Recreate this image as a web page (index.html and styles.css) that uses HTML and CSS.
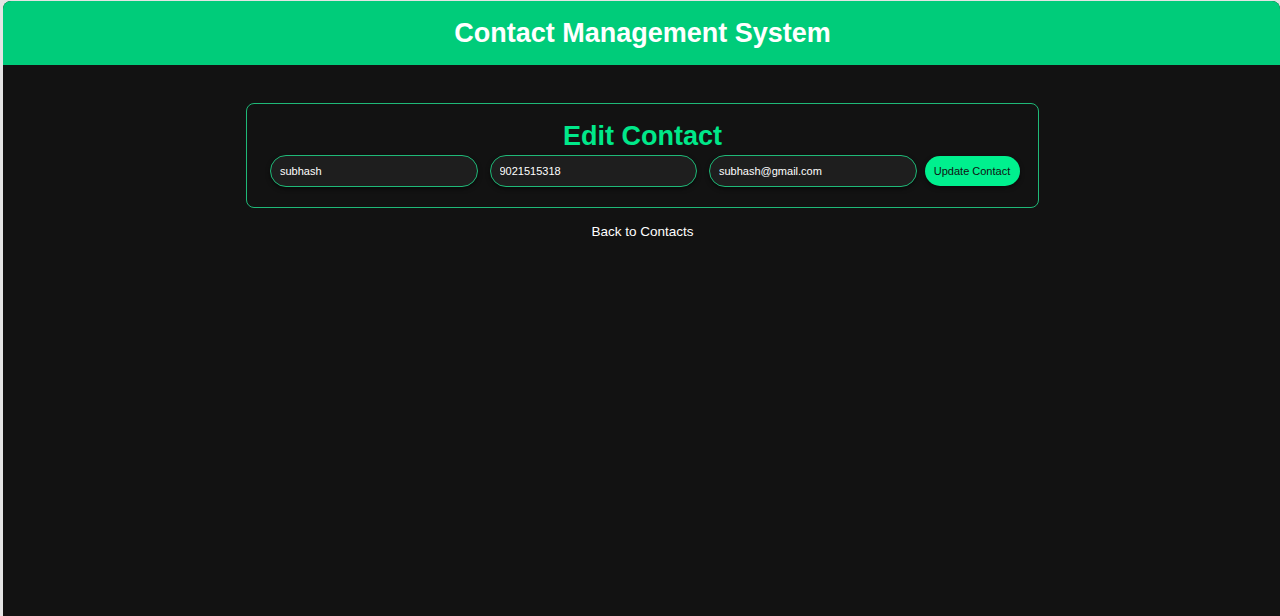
FILE: index.html
```html
<!DOCTYPE html>
<html>
<head>
<meta charset="utf-8">
<link rel="stylesheet" href="styles.css">
</head>
<body>
<div class="app">
  <header class="topbar">
    <h1 class="topbar-title">Contact Management System</h1>
  </header>
  <main class="content">
    <section class="card">
      <h2 class="card-title">Edit Contact</h2>
      <form class="edit-form">
        <input class="field field-name" type="text" value="subhash">
        <input class="field field-phone" type="text" value="9021515318">
        <input class="field field-email" type="text" value="subhash@gmail.com">
        <button class="btn-update" type="button">Update Contact</button>
      </form>
    </section>
    <a class="back-link" href="#">Back to Contacts</a>
  </main>
</div>
</body>
</html>
```

FILE: styles.css
```css
html, body {
  margin: 0;
  padding: 0;
  height: 100%;
}
body {
  background: #e4e4e4;
  font-family: "Liberation Sans", Arial, sans-serif;
  padding: 1px 0 0 3px;
  box-sizing: border-box;
  overflow: hidden;
}
.app {
  height: 100%;
  background: #121212;
  border-radius: 8px 8px 0 0;
  overflow: hidden;
  display: flex;
  flex-direction: column;
}
.topbar {
  background: #00cc7a;
  height: 64px;
  display: flex;
  align-items: center;
  justify-content: center;
  flex-shrink: 0;
}
.topbar-title {
  margin: 0 0 0 2px;
  color: #ffffff;
  font-size: 27px;
  font-weight: bold;
}
.content {
  display: flex;
  flex-direction: column;
  align-items: center;
  padding: 38px 0 0 2px;
}
.card {
  width: 793px;
  box-sizing: border-box;
  border: 1px solid #1fb978;
  border-radius: 8px;
  padding: 16px 18px 20px 23px;
}
.card-title {
  margin: 0 5px 3px 0;
  text-align: center;
  color: #00e88a;
  font-size: 27px;
  font-weight: bold;
  line-height: 32px;
}
.edit-form {
  display: flex;
  align-items: center;
}
.field {
  width: 207.5px;
  height: 32px;
  box-sizing: border-box;
  background: #1e1e1e;
  border: 1px solid #1fb978;
  border-radius: 16px;
  color: #ffffff;
  font-family: "Liberation Sans", Arial, sans-serif;
  font-size: 11px;
  padding: 0 9px;
  margin-right: 12px;
  box-shadow: 0 2px 4px rgba(0,0,0,0.5);
  outline: none;
}
.field-email {
  margin-right: 8px;
}
.btn-update {
  width: 95px;
  height: 30px;
  border: none;
  border-radius: 15px;
  background: #00f08e;
  color: #111111;
  font-family: "Liberation Sans", Arial, sans-serif;
  font-size: 11px;
  padding: 0;
  box-shadow: 0 2px 4px rgba(0,0,0,0.5);
}
.back-link {
  margin-top: 16px;
  color: #ffffff;
  text-decoration: none;
  font-size: 13.5px;
}
```
